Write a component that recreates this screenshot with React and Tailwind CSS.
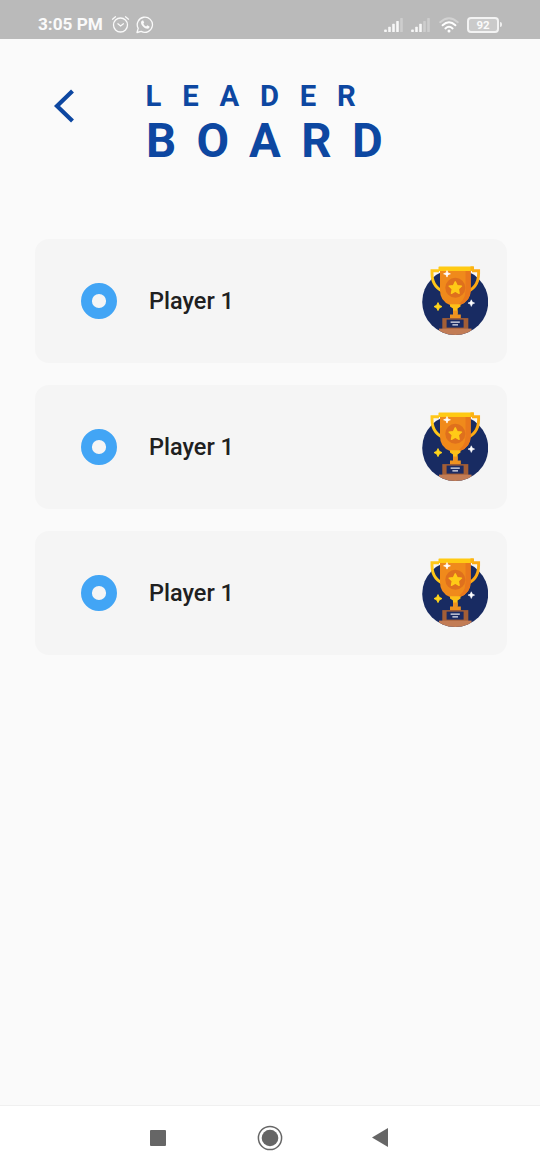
const players = ["Player 1", "Player 1", "Player 1"];

function Signal({ lit }) {
  return (
    <svg width="20" height="16" viewBox="0 0 20 16" fill="white">
      {[0, 1, 2, 3, 4].map((i) => (
        <rect key={i} x={i * 4 + 0.2} y={12.6 - i * 2.9} width="2.6" height={2.4 + i * 2.9} rx="0.6" opacity={i < lit ? 0.88 : 0.28} />
      ))}
    </svg>
  );
}

function StatusBar() {
  return (
    <div className="flex h-[39px] items-center bg-[#bababa] pt-[10px] pr-[38px] pl-[38px] text-[#fafafa]">
      <span className="w-[73px] text-[17.2px] leading-none font-bold whitespace-nowrap">3:05 PM</span>
      <svg width="19" height="19" viewBox="0 0 19 19" fill="none" stroke="currentColor" strokeWidth="1.3" strokeLinecap="round">
        <circle cx="9.5" cy="10" r="7" />
        <path d="M1.5 4.2 4.5 1.8M17.5 4.2 14.5 1.8M6.9 8.8l2.7 2.1 2.8-2.1" />
      </svg>
      <svg className="ml-[6px]" width="18" height="18" viewBox="0 0 18 18" fill="none" stroke="currentColor" strokeWidth="1.3">
        <path d="M1 16.5 2.2 12.4A7.6 7.6 0 1 1 5.2 15.4Z" strokeLinejoin="round" />
        <path d="M6.3 4.4C4.4 5.2 4.7 8 7 10.4 9.4 12.9 12.2 13.3 13.3 11.7L13.5 10.4 11.3 9.3 10.1 10.5C9 10.1 7.9 9 7.3 7.8L8.2 6.8 7.3 4.4Z" fill="currentColor" stroke="none" />
      </svg>
      <div className="ml-auto flex items-center">
        <Signal lit={4} />
        <span className="w-[7px]" />
        <Signal lit={3} />
        <svg className="ml-[8px]" width="20" height="16" viewBox="0 0 20 16" fill="none" stroke="white" strokeWidth="2" strokeLinecap="round">
          <path d="M1.2 5.2Q10-2.8 18.8 5.2" opacity=".35" />
          <path d="M3.6 8.2Q10 2.3 16.4 8.2M6.4 11.4Q10 8 13.6 11.4" />
          <circle cx="10" cy="14" r="1.5" fill="white" stroke="none" />
        </svg>
        <div className="ml-[8px] flex h-[16px] w-[32px] items-center justify-center rounded-[4px] border-2 border-[#f3f3f3] bg-[#cacaca] pt-[2px] text-[11.5px] leading-none font-bold">92</div>
        <div className="ml-px h-[5px] w-[2px] rounded-r bg-[#eeeeee]" />
      </div>
    </div>
  );
}

function Trophy() {
  return (
    <svg className="block" width="66" height="70" viewBox="12 11.4 66 70">
      <clipPath id="disc"><circle cx="45.2" cy="47.4" r="33" /></clipPath>
      <circle cx="45.2" cy="47.4" r="33" fill="#182b62" />
      <path d="M29 16.1H22V19Q22 34 37 38.5" fill="none" stroke="#ffc719" strokeWidth="2.9" />
      <path d="M62 16.1H68.6V19Q68.6 34 54 38.5" fill="none" stroke="#fcaa14" strokeWidth="2.9" />
      <path d="M30 14H60.7V36Q60.5 46.5 50 50.5L46 52H44.6L40 50.5Q30 46.5 30 36Z" fill="#f08a1b" />
      <path d="M55.5 14H60.7V36Q60.5 46.5 50 50.5L46 52H44.6Q55.5 47 55.5 36Z" fill="#e9781c" />
      <rect x="28.5" y="11.8" width="35" height="4.5" rx=".7" fill="#ffca13" />
      <path d="M60.5 11.8H64V16.3H60.5Z" fill="#fcb315" />
      <circle cx="45.3" cy="33.1" r="10" fill="#df701d" />
      <path d="M45.3 27.2 47.1 31 51.5 31.5 48.3 34.4 49.1 38.7 45.3 36.6 41.5 38.7 42.3 34.4 39.1 31.5 43.5 31Z" fill="#ffca17" stroke="#ffca17" strokeWidth="1.4" strokeLinejoin="round" />
      <path d="M40 49.7H50.5V52L47.6 54V60H43V54L40 52Z" fill="#fdc018" />
      <path d="M43 56H47.6V60H50.8V64H40V60H43Z" fill="#ef9220" />
      <rect x="32.3" y="63.5" width="26" height="11" fill="#a35e36" />
      <rect x="36.6" y="65" width="17" height="8" fill="#1b2b64" />
      <path d="M40.6 67.6H49.8M42.4 70.2H48" stroke="#e8e7ef" strokeWidth="1.3" />
      <g clipPath="url(#disc)"><rect x="29" y="74" width="32.5" height="8" fill="#c27c55" /></g>
      <path d="M37 16 37.9 18.3 40.4 19.2 37.9 20.1 37 22.5 36.1 20.1 33.6 19.2 36.1 18.3Z" fill="white" stroke="white" strokeWidth=".7" />
      <path d="M61.3 45.2 62.3 47.5 64.6 48.5 62.3 49.5 61.3 51.8 60.3 49.5 58 48.5 60.3 47.5Z" fill="white" stroke="white" strokeWidth=".6" />
      <path d="M28 48 29.3 50.7 32 52 29.3 53.3 28 56 26.7 53.3 24 52 26.7 50.7Z" fill="#ffd41b" stroke="#ffd41b" strokeWidth=".9" />
    </svg>
  );
}

function PlayerCard({ name }) {
  return (
    <li className="flex h-[124px] items-center rounded-[14px] bg-[#f5f5f5] pr-[19px] pl-[46px]">
      <svg width="36" height="36" viewBox="0 0 36 36">
        <circle cx="18" cy="18" r="12.55" fill="none" stroke="#42a5f5" strokeWidth="10.9" />
      </svg>
      <span className="ml-[32px] text-[23.5px] leading-[24px] font-medium text-[#202020]">{name}</span>
      <span className="ml-auto"><Trophy /></span>
    </li>
  );
}

export default function App() {
  return (
    <div className="flex h-[1170px] w-[540px] flex-col bg-[#fafafa] font-['Roboto',sans-serif]">
      <StatusBar />
      <header className="flex h-[200px] items-start pt-[42px] pl-[53px] text-[#0d47a1]">
        <svg className="mt-[7px]" width="22" height="36" viewBox="0 0 22 36" fill="none" stroke="currentColor" strokeWidth="4.2">
          <path d="M19.5 3 4 18 19.5 33" />
        </svg>
        <h1 className="ml-[70px] font-bold whitespace-nowrap">
          <span className="block pl-[0.5px] text-[29.3px] leading-[30px] tracking-[20.8px]">LEADER</span>
          <span className="block pt-px pl-px text-[47.3px] leading-[58px] tracking-[20.4px]">BOARD</span>
        </h1>
      </header>
      <ul className="flex flex-1 flex-col gap-[22px] pr-[33px] pl-[35px]">
        {players.map((name, i) => <PlayerCard key={i} name={name} />)}
      </ul>
      <nav className="flex h-[65px] items-center justify-between border-t border-[#f0f0f0] bg-white pr-[152px] pb-px pl-[150px] text-[#666666]">
        <span className="h-4 w-4 rounded-[1px] bg-[#666666]" />
        <svg className="ml-[2px]" width="26" height="26" viewBox="0 0 26 26">
          <circle cx="13" cy="13" r="11.6" fill="none" stroke="currentColor" strokeWidth="1.5" />
          <circle cx="13" cy="13" r="8.3" fill="currentColor" />
        </svg>
        <svg width="16" height="19" viewBox="0 0 16 19" fill="currentColor"><path d="M0 9.5 16 0V19Z" /></svg>
      </nav>
    </div>
  );
}
